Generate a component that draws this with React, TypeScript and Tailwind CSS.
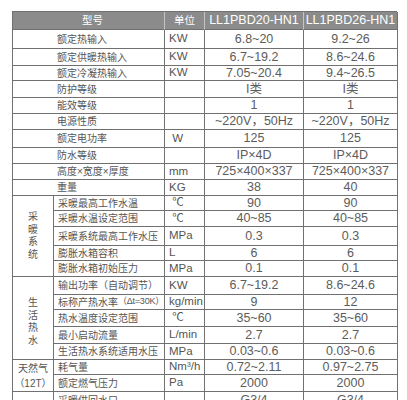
type Row = {
  label: React.ReactNode
  unit?: string
  a: string
  b: string
}

const lines = 'border-r border-b border-[#707070]'

// top block: label spans both left columns
const topRows: Row[] = [
  { label: '额定热输入', unit: 'KW', a: '6.8~20', b: '9.2~26' },
  { label: '额定供暖热输入', unit: 'KW', a: '6.7~19.2', b: '8.6~24.6' },
  { label: '额定冷凝热输入', unit: 'KW', a: '7.05~20.4', b: '9.4~26.5' },
  { label: '防护等级', a: 'I类', b: 'I类' },
  { label: '能效等级', a: '1', b: '1' },
  { label: '电源性质', a: '~220V，50Hz', b: '~220V，50Hz' },
  { label: '额定电功率', unit: ' W', a: '125', b: '125' },
  { label: '防水等级', a: 'IP×4D', b: 'IP×4D' },
  { label: '高度×宽度×厚度', unit: 'mm', a: '725×400×337', b: '725×400×337' },
  { label: '重量', unit: 'KG', a: '38', b: '40' },
]

const groups: { name: React.ReactNode; rows: Row[] }[] = [
  {
    name: (
      <div className="flex flex-col items-center leading-[12.5px]">
        <span>采</span><span>暖</span><span>系</span><span>统</span>
      </div>
    ),
    rows: [
      { label: '采暖最高工作水温', unit: ' ℃', a: '90', b: '90' },
      { label: '采暖水温设定范围', unit: ' ℃', a: '40~85', b: '40~85' },
      { label: '采暖系统最高工作水压', unit: 'MPa', a: '0.3', b: '0.3' },
      { label: '膨胀水箱容积', unit: 'L', a: '6', b: '6' },
      { label: '膨胀水箱初始压力', unit: 'MPa', a: '0.1', b: '0.1' },
    ],
  },
  {
    name: (
      <div className="flex flex-col items-center leading-[12.5px] mt-[8px]">
        <span>生</span><span>活</span><span>热</span><span>水</span>
      </div>
    ),
    rows: [
      { label: '输出功率（自动调节）', unit: 'KW', a: '6.7~19.2', b: '8.6~24.6' },
      {
        label: (
          <>
            标称产热水率<span className="text-[9px] tracking-tight">（Δt=30K）</span>
          </>
        ),
        unit: 'kg/min',
        a: '9',
        b: '12',
      },
      { label: '热水温度设定范围', unit: ' ℃', a: '35~60', b: '35~60' },
      { label: '最小启动流量', unit: 'L/min', a: '2.7', b: '2.7' },
      { label: '生活热水系统适用水压', unit: 'MPa', a: '0.03~0.6', b: '0.03~0.6' },
    ],
  },
  {
    name: (
      <div className="flex flex-col items-center leading-[15px]">
        <span>天然气</span>
        <span>（12T）</span>
      </div>
    ),
    rows: [
      { label: '耗气量', unit: 'Nm³/h', a: '0.72~2.11', b: '0.97~2.75' },
      { label: '额定燃气压力', unit: 'Pa', a: '2000', b: '2000' },
    ],
  },
  {
    name: null,
    rows: [{ label: '采暖供回水口', a: 'G3/4', b: 'G3/4' }],
  },
]

function Values({ row }: { row: Row }) {
  return (
    <>
      <div className={`${lines} flex items-center pl-[4px] text-[11.5px] whitespace-pre`}>
        {row.unit ?? ''}
      </div>
      <div className={`${lines} flex items-center justify-center text-[12.5px] text-[#5c5c5c]`}>{row.a}</div>
      <div className={`${lines} flex items-center justify-center text-[12.5px] text-[#5c5c5c]`}>{row.b}</div>
    </>
  )
}

export default function App() {
  return (
    <div
      className="w-[407px] h-[400px] overflow-hidden bg-white pt-[11px] pl-[12px] text-[#555555]"
      style={{ fontFamily: '"Liberation Sans", "Noto Sans CJK SC", sans-serif' }}
    >
      <div className="grid w-[385px] grid-cols-[41px_111px_40px_99px_94px] grid-rows-[18px_19px_17px_15px_17px_16px_16px_18px_16px_16px_16px_15px_16px_19px_15px_16px_18px_15px_17px_17px_16px_15px_17px_17px] border-t border-l border-[#707070]">
        {/* header */}
        <div className="col-span-2 flex items-center justify-center pl-[8px] bg-[#8b8b8b] text-white text-[10.5px] border-r border-r-[#c4c4c4] border-b border-b-[#707070]">
          型号
        </div>
        <div className="flex items-center justify-center bg-[#8b8b8b] text-white text-[10.5px] border-r border-r-[#c4c4c4] border-b border-b-[#707070]">
          单位
        </div>
        <div className="flex items-center justify-center bg-[#8b8b8b] text-white text-[12.5px] border-r border-r-[#c4c4c4] border-b border-b-[#707070]">
          LL1PBD20-HN1
        </div>
        <div className="flex items-center justify-center bg-[#8b8b8b] text-white text-[12.5px] border-r border-b border-[#707070]">
          LL1PBD26-HN1
        </div>

        {topRows.map((row, i) => (
          <div key={i} className="contents">
            <div className={`${lines} col-span-2 flex items-center pl-[44px] text-[10px]`}>{row.label}</div>
            <Values row={row} />
          </div>
        ))}

        {groups.map((g, gi) => (
          <div key={gi} className="contents">
            <div
              className={`${lines} flex items-center justify-center text-[10px] ${
                g.rows.length === 5 ? 'row-span-5' : g.rows.length === 2 ? 'row-span-2' : 'row-span-1'
              }`}
            >
              {g.name}
            </div>
            {g.rows.map((row, i) => (
              <div key={i} className="contents">
                <div className={`${lines} flex items-center pl-[4px] text-[10px] whitespace-nowrap`}>{row.label}</div>
                <Values row={row} />
              </div>
            ))}
          </div>
        ))}
      </div>
    </div>
  )
}
